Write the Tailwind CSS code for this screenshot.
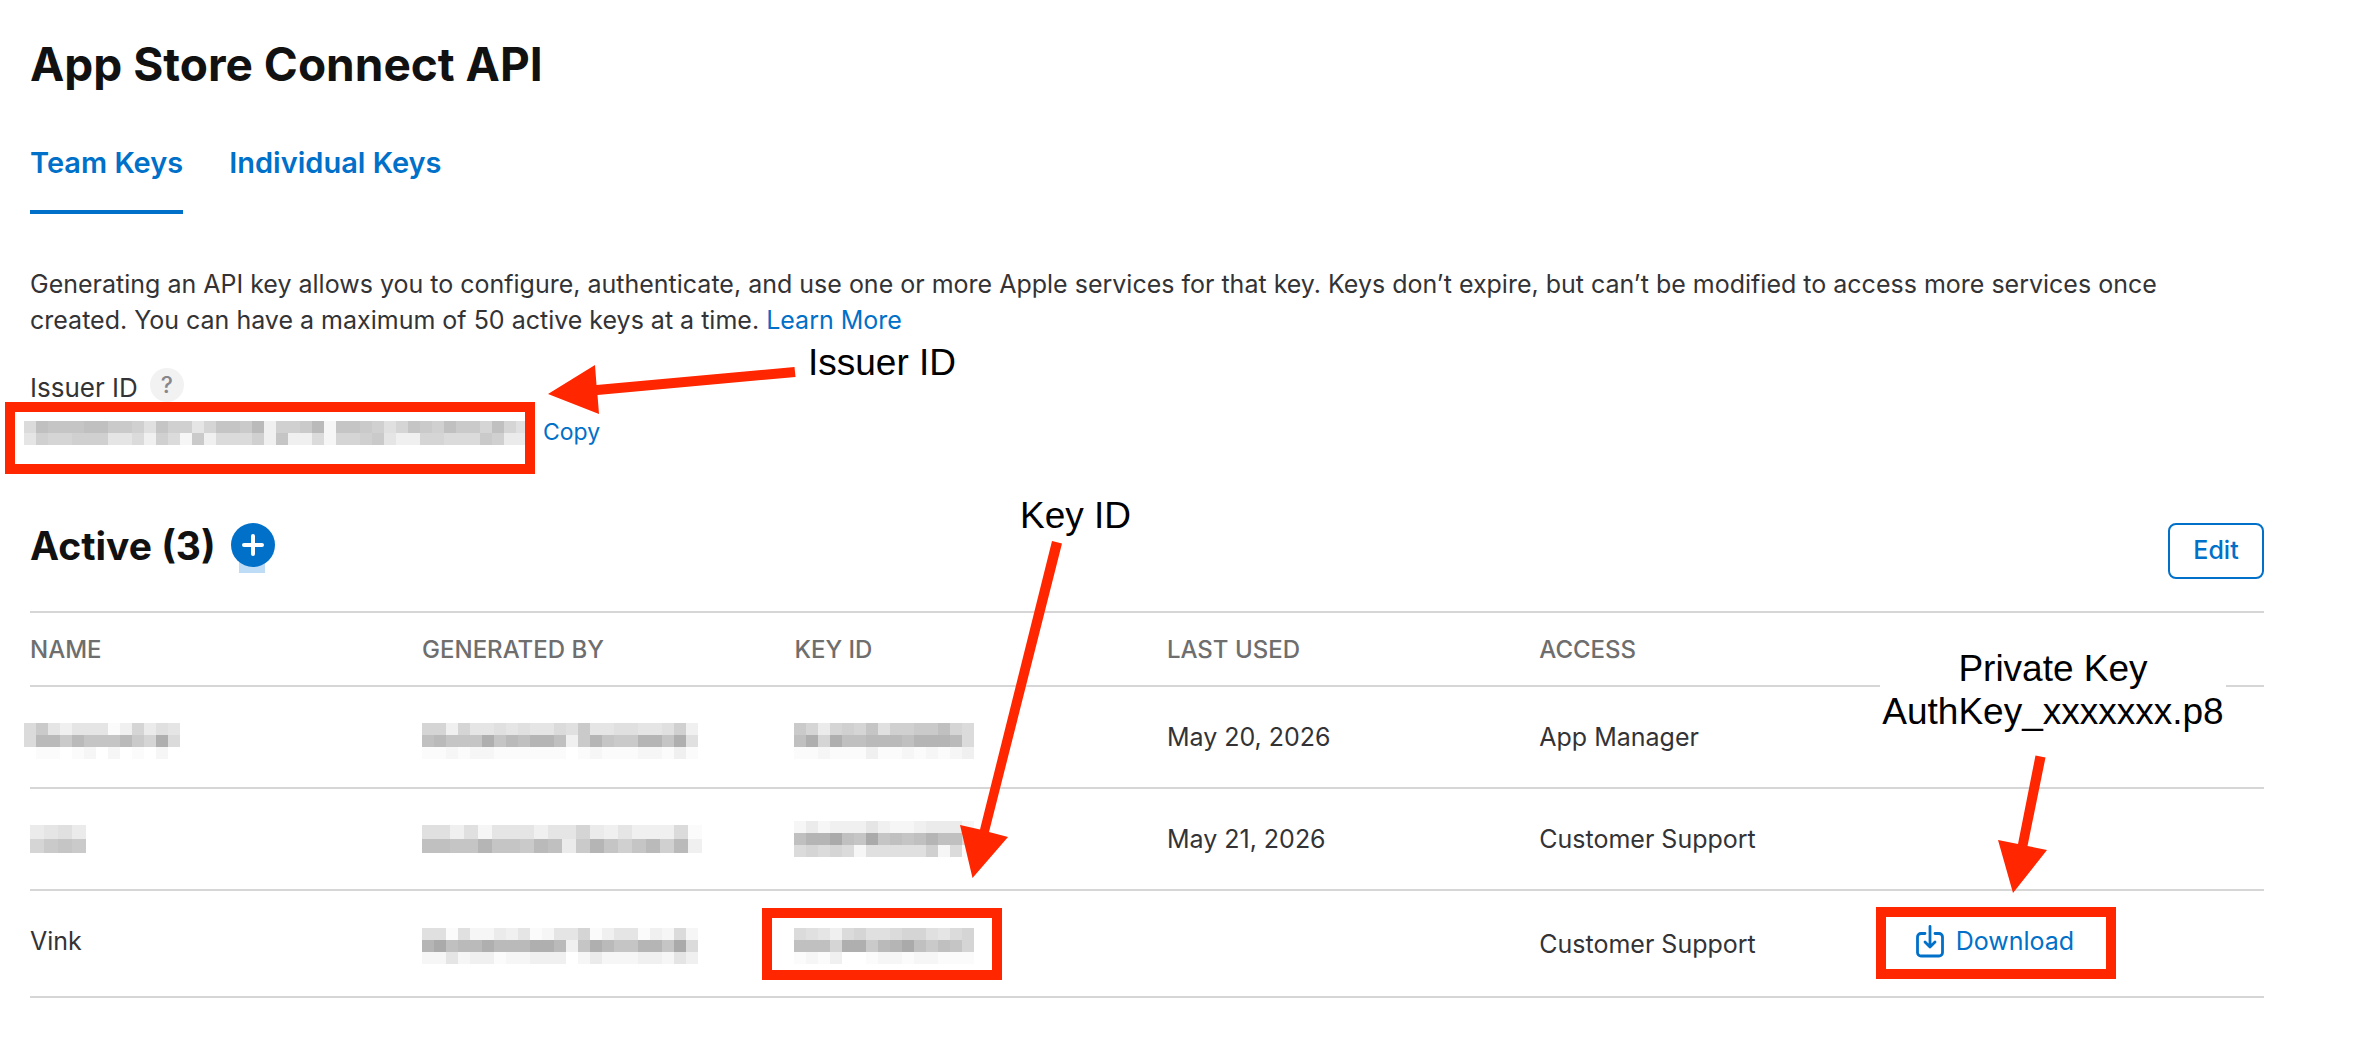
<!DOCTYPE html>
<html lang="en">
<head>
<meta charset="utf-8">
<meta name="viewport" content="width=device-width, initial-scale=1">
<title>App Store Connect API</title>
<script src="https://cdn.jsdelivr.net/npm/@tailwindcss/browser@4"></script>
</head>
<body class="bg-white font-['Inter',sans-serif] text-[25px] text-[#333336]">
<main class="relative pt-9 pr-[94px] pb-12 pl-[30px]">
    <h1 class="text-[46px] leading-[56px] font-bold text-[#111]">App Store Connect API</h1>

    <nav class="mt-12 flex gap-[46px] text-[29px] leading-[46px] font-semibold text-[#0070c9]">
        <a href="#" class="border-b-4 border-[#0070c9] pb-6">Team Keys</a>
        <a href="#">Individual Keys</a>
    </nav>

    <p class="mt-[52px] pr-10 leading-9">Generating an API key allows you to configure, authenticate, and use one or more Apple services for that key. Keys don’t expire, but can’t be modified to access more services once created. You can have a maximum of 50 active keys at a time. <a href="#" class="text-[#0070c9]">Learn More</a></p>

    <!-- Issuer ID -->
    <div class="mt-[30px] flex items-start gap-3">
        <span class="text-[26px] leading-10">Issuer ID</span>
        <button type="button" aria-label="About the issuer ID" class="size-[34px] rounded-full bg-[#f2f2f2] text-[23px] leading-[34px] font-medium text-[#86868b]">?</button>
    </div>
    <div class="-ml-1.5 flex h-12 items-center gap-[15px]">
        <span class="relative">
            <span class="block pt-0.5" data-cell="12" data-rows="9455544667a577b85563d7763e5567a8567466848a|b788777bb9d79e6d9997d5dd9e8876bdd8899967cc"></span>
            <span class="absolute -top-[17px] -right-[7px] -bottom-[29px] -left-[19px] border-10 border-[#ff2600]"></span>
        </span>
        <button type="button" class="text-[23px] text-[#0070c9]">Copy</button>
    </div>

    <!-- Active keys -->
    <div class="mt-[67px] flex items-start justify-between">
        <div class="flex items-start gap-[15px]">
            <h2 class="text-[39px] leading-[46px] font-bold text-[#111]">Active (3)</h2>
            <button type="button" aria-label="Generate API key" class="relative">
                <span class="absolute top-6 left-2 h-[26px] w-[26px] bg-[#bfdcf7]"></span>
                <svg class="relative size-11" viewBox="0 0 44 44" fill="none">
                    <circle cx="22" cy="22" r="22" fill="#0070c9"/>
                    <path d="M22 13v18M13 22h18" stroke="#fff" stroke-width="4" stroke-linecap="round"/>
                </svg>
            </button>
        </div>
        <button type="button" class="h-14 w-24 rounded-lg border-2 border-[#0070c9] font-medium text-[#0070c9]">Edit</button>
    </div>

    <table class="mt-8 w-full table-fixed border-separate border-spacing-0 border-t-2 border-[#d6d6d6] text-left [&_td]:border-b-2 [&_td]:border-[#d6d6d6] [&_th]:border-b-2 [&_th]:border-[#d6d6d6]">
        <colgroup>
            <col class="w-[17.55%]">
            <col class="w-[16.67%]">
            <col class="w-[16.67%]">
            <col class="w-[16.67%]">
            <col class="w-[16.67%]">
            <col>
        </colgroup>
        <thead class="text-2xl text-[#6e6e6e]">
            <tr class="h-[74px]">
                <th class="pt-0.5 font-medium">NAME</th>
                <th class="pt-0.5 font-medium">GENERATED BY</th>
                <th class="pt-0.5 font-medium">KEY ID</th>
                <th class="pt-0.5 font-medium">LAST USED</th>
                <th class="pt-0.5 font-medium">ACCESS</th>
                <th aria-label="Download"></th>
            </tr>
        </thead>
        <tbody>
            <tr class="h-[102px]">
                <td><span class="-ml-1.5 block pt-2" data-cell="12" data-rows="96bdbbbfd8cab|9336355536819|.ff.fe.e.f.e."></span></td>
                <td><span class="block pt-2" data-cell="12" data-rows="88d8bbababb9a6bbaabba7d|435551534224d625662251a|ffefeeffffff.fefffeefdf"></span></td>
                <td><span class="block pt-2" data-cell="12" data-rows="68c8785a7766489|418144333422239|ffefffdffefefed"></span></td>
                <td class="pt-0.5">May 20, 2026</td>
                <td class="pt-0.5">App Manager</td>
                <td></td>
            </tr>
            <tr class="h-[102px]">
                <td><span class="block" data-cell="14" data-rows="cbac|8656"></span></td>
                <td><span class="block" data-cell="14" data-rows="aadaebbbdbb8cdbddd9f|4455255634c62575373d"></span></td>
                <td><span class="block" data-cell="12" data-rows="ecedddbdeedccce|422045054542449|98989eaaaaa7e9f"></span></td>
                <td class="pt-0.5">May 21, 2026</td>
                <td class="pt-0.5">Customer Support</td>
                <td></td>
            </tr>
            <tr class="h-[107px]">
                <td class="pb-1">Vink</td>
                <td><span class="block pt-1" data-cell="12" data-rows="aafaeecdbfebb8fdbbfde9e|204331333113d5135522509|eebeddfeeddd.eceeeddebd"></span></td>
                <td>
                    <span class="relative block pt-1">
                        <span class="block" data-cell="12" data-rows="9abd98aa988ab98|444811632046458|fefd..feefeefff"></span>
                        <span class="absolute -top-4 -left-8 h-[72px] w-60 border-10 border-[#ff2600]"></span>
                    </span>
                </td>
                <td></td>
                <td class="pt-0.5">Customer Support</td>
                <td class="pb-1">
                    <span class="relative block">
                        <a href="#" class="ml-1 flex items-center gap-3 text-[#0070c9]">
                            <svg class="h-[34px] w-7" viewBox="0 0 28 34" fill="none" stroke="currentColor" stroke-width="2.800" stroke-linecap="round" stroke-linejoin="round">
                                <path d="M9 8.500H5a3.500 3.500 0 0 0-3.500 3.500V27.500a3.500 3.500 0 0 0 3.500 3.500h18a3.500 3.500 0 0 0 3.500-3.500V12a3.500 3.500 0 0 0-3.500-3.500H19"/>
                                <path d="M14 1.500v20.500M9 17l5 5 5-5"/>
                            </svg>
                            Download
                        </a>
                        <span class="absolute -top-4 -left-9 h-[72px] w-60 border-10 border-[#ff2600]"></span>
                    </span>
                </td>
            </tr>
        </tbody>
    </table>

    <!-- Callouts -->
    <div class="pointer-events-none absolute inset-0 font-['Liberation_Sans',Arial,sans-serif] text-[37px] leading-[43px] text-black">
        <span class="absolute top-[341px] left-[808px]">Issuer ID</span>
        <span class="absolute top-[494px] left-[1020px]">Key ID</span>
        <span class="absolute top-[647px] right-[132px] w-[346px] bg-white text-center">Private Key<br>AuthKey_xxxxxxx.p8</span>

        <svg class="absolute top-[360px] left-[540px] h-[60px] w-[260px]" viewBox="540 360 260 60" fill="#ff2600">
            <path d="M548 394 595 365 596.500 385 794.500 367 795.500 377 597.500 395 599 414z"/>
        </svg>
        <svg class="absolute top-[540px] left-[950px] h-[340px] w-[120px]" viewBox="950 540 120 340" fill="#ff2600">
            <path d="M972.500 878 960 825 980 829.500 1052 541 1062 543.500 989 832 1008 837z"/>
        </svg>
        <svg class="absolute top-[750px] right-[308px] h-[150px] w-[60px]" viewBox="1990 750 60 150" fill="#ff2600">
            <path d="M2013 893 1998 840 2018 844 2035.500 755.500 2045.500 757.500 2027.500 846 2047 850z"/>
        </svg>
    </div>
</main>

<script>
    // Draws each masked value as grey blocks, one hex digit per block (0 dark, f light)
    document.querySelectorAll('[data-rows]').forEach(el => {
        const size = Number(el.dataset.cell);
        const rows = el.dataset.rows.split('|');
        const width = rows[0].length * size;
        const height = rows.length * size;
        let rects = '';

        rows.forEach((row, y) => {
            [...row].forEach((digit, x) => {
                if (digit === '.') return;
                const grey = 170 + Math.round(parseInt(digit, 16) * 5.4);
                rects += `<rect x="${x * size}" y="${y * size}" width="${size}" height="${size}" fill="rgb(${grey},${grey},${grey})"/>`;
            });
        });

        el.innerHTML = `<svg width="${width}" height="${height}" shape-rendering="crispEdges" aria-hidden="true">${rects}</svg>`;
    });
</script>
</body>
</html>
